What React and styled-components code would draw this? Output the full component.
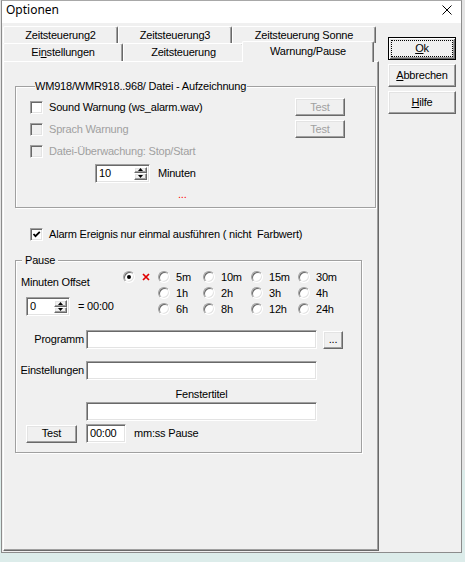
import React from 'react';
import styled, { createGlobalStyle, css } from 'styled-components';

const Global = createGlobalStyle`
  html, body { margin: 0; padding: 0; }
  body {
    width: 465px; height: 562px; overflow: hidden;
    font-family: "Liberation Sans", Arial, sans-serif;
    font-size: 11px; color: #000;
    letter-spacing: -0.2px;
  }
  * { box-sizing: border-box; }
`;

const sunken = css`
  border: 1px solid;
  border-color: #a0a0a0 #ffffff #ffffff #a0a0a0;
  box-shadow: inset 1px 1px 0 #696969, inset -1px -1px 0 #e3e3e3;
`;

const raised = css`
  border: 1px solid;
  border-color: #ffffff #696969 #696969 #ffffff;
  box-shadow: inset -1px -1px 0 #a0a0a0, inset 1px 1px 0 #e3e3e3;
`;

const Screen = styled.div`
  width: 465px;
  height: 562px;
  display: flex;
  align-items: flex-start;
  background: linear-gradient(to bottom, #e4e4e4 0, #e4e4e4 470px, #dcecea 470px);
`;

const Dialog = styled.div`
  margin-left: 1px;
  width: 461px;
  height: 553px;
  border: 1px solid #8c8c8c;
  border-top-color: #a8a8a8;
  background: #f0f0f0;
  display: flex;
  flex-direction: column;
`;

const TitleBar = styled.div`
  height: 22px;
  flex: none;
  background: #ffffff;
  display: flex;
  align-items: center;
  justify-content: space-between;
  padding: 0 9px 4px 4px;
`;

const Title = styled.span`
  font-family: "Noto Sans", "Liberation Sans", sans-serif;
  font-size: 12px;
  letter-spacing: 0;
  line-height: 16px;
  color: #000;
`;

const Body = styled.div`
  flex: 1;
  display: flex;
  align-items: flex-start;
  padding: 3px 0 0 1px;
`;

const TabControl = styled.div`
  width: 376px;
  height: 525px;
  display: flex;
  flex-direction: column;
`;

const TabRow = styled.div`
  height: ${p => p.$h}px;
  flex: none;
  display: flex;
  align-items: flex-end;
`;

const Tab = styled.div`
  width: ${p => p.$w}px;
  height: 100%;
  flex: none;
  display: flex;
  align-items: center;
  justify-content: center;
  background: #f0f0f0;
  border-top: 1px solid #ffffff;
  border-left: 1px solid #ffffff;
  border-right: 1px solid #696969;
  box-shadow: inset -1px 0 0 #a0a0a0;
  border-radius: 2px 2px 0 0;
  line-height: 13px;
  white-space: nowrap;
  ${p => p.$active && css`
    height: 21px;
    margin: 0 -2px -1px -2px;
    padding-bottom: 2px;
    position: relative;
    z-index: 1;
  `}
`;

const Panel = styled.div`
  flex: 1;
  border-top: 1px solid #ffffff;
  border-left: 1px solid #ffffff;
  border-right: 1px solid #696969;
  border-bottom: 1px solid #696969;
  box-shadow: inset -1px -1px 0 #a0a0a0;
  padding-left: 11px;
  display: flex;
  flex-direction: column;
  align-items: flex-start;
`;

const GroupBox = styled.div`
  width: ${p => p.$w}px;
  margin-top: ${p => p.$mt}px;
  padding: 0 ${p => p.$pr || 0}px ${p => p.$pb || 0}px ${p => p.$pl || 0}px;
  border: 1px solid #a0a0a0;
  box-shadow: 1px 1px 0 #ffffff, inset 1px 1px 0 #ffffff;
  display: flex;
  flex-direction: column;
  align-items: stretch;
`;

const Caption = styled.span`
  align-self: flex-start;
  margin: -7px 0 ${p => p.$mb || 0}px ${p => p.$ml}px;
  padding: ${p => p.$pad};
  background: #f0f0f0;
  line-height: 13px;
  white-space: nowrap;
`;

const Row = styled.div`
  height: ${p => p.$h}px;
  margin-top: ${p => p.$mt || 0}px;
  margin-left: ${p => p.$ml || 0}px;
  display: flex;
  align-items: center;
  flex: none;
`;

const Box = styled.span`
  ${sunken};
  width: 13px;
  height: 13px;
  flex: none;
  background: ${p => (p.$disabled ? '#f0f0f0' : '#ffffff')};
  display: flex;
  align-items: center;
  justify-content: center;
`;

const Text = styled.span`
  line-height: 13px;
  white-space: nowrap;
  margin-left: ${p => p.$ml || 0}px;
  color: ${p => (p.$disabled ? '#a0a0a0' : '#000000')};
  ${p => p.$grow && 'flex: 1;'}
`;

const PushButton = styled.button`
  ${raised};
  width: ${p => p.$w}px;
  height: ${p => p.$h}px;
  margin-left: ${p => p.$ml || 0}px;
  flex: none;
  padding: 0;
  background: #f0f0f0;
  font-family: "Liberation Sans", Arial, sans-serif;
  font-size: 11px;
  letter-spacing: -0.2px;
  line-height: 13px;
  color: ${p => (p.$disabled ? '#a0a0a0' : '#000000')};
  display: flex;
  align-items: center;
  justify-content: center;
`;

const ButtonColumn = styled.div`
  margin: 11px 0 0 9px;
  display: flex;
  flex-direction: column;
  gap: 4px;
`;

const DialogButton = styled(PushButton)`
  ${p => p.$default && css`
    border: 1px solid #000000;
    box-shadow: inset 1px 1px 0 #ffffff, inset -1px -1px 0 #696969,
      inset 2px 2px 0 #e3e3e3, inset -2px -2px 0 #a0a0a0;
    padding: 2px;
    align-items: stretch;
  `}
`;

const FocusRing = styled.span`
  flex: 1;
  border: 1px dotted #000000;
  display: flex;
  align-items: center;
  justify-content: center;
`;

const SpinBox = styled.div`
  ${sunken};
  width: ${p => p.$w}px;
  height: 19px;
  margin-left: ${p => p.$ml || 0}px;
  flex: none;
  background: #ffffff;
  display: flex;
  align-items: stretch;
  padding: 2px;
`;

const SpinValue = styled.span`
  flex: 1;
  line-height: 13px;
  padding-left: 1px;
  display: flex;
  align-items: center;
`;

const SpinButtons = styled.div`
  width: 13px;
  display: flex;
  flex-direction: column;
`;

const SpinHalf = styled.span`
  ${raised};
  flex: 1;
  background: #f0f0f0;
  display: flex;
  align-items: center;
  justify-content: center;
`;

const TextInput = styled.div`
  ${sunken};
  width: ${p => p.$w}px;
  height: 19px;
  margin-left: ${p => p.$ml || 0}px;
  flex: none;
  background: #ffffff;
  padding: 2px 3px;
  line-height: 13px;
`;

const FieldLabel = styled.span`
  width: 70px;
  flex: none;
  text-align: right;
  padding-right: 2px;
  line-height: 13px;
  white-space: nowrap;
`;

const CenterLabel = styled.span`
  width: 231px;
  margin-left: 70px;
  text-align: center;
  line-height: 13px;
`;

const TopSection = styled.div`
  display: flex;
  height: 50px;
`;

const LeftCol = styled.div`
  width: 107px;
  flex: none;
  padding: 9px 0 0 5px;
  display: flex;
  flex-direction: column;
`;

const RadioGrid = styled.div`
  display: grid;
  grid-template-columns: 35px 45px 48px 47px 47px;
  grid-auto-rows: 16px;
  padding-top: 2px;
`;

const RadioCell = styled.div`
  display: flex;
  align-items: center;
`;

const RadioCircle = styled.span`
  width: 12px;
  height: 12px;
  flex: none;
  border-radius: 50%;
  border: 1px solid;
  border-color: #a0a0a0 #ffffff #ffffff #a0a0a0;
  box-shadow: inset 1px 1px 0 #696969, inset -1px -1px 0 #e3e3e3;
  background: #ffffff;
  display: flex;
  align-items: center;
  justify-content: center;
`;

const RadioDot = styled.span`
  width: 4px;
  height: 4px;
  border-radius: 50%;
  background: #000000;
`;

const Dots = styled.span`
  margin-left: ${p => p.$ml}px;
  color: #ff0000;
  line-height: 13px;
`;

const CloseIcon = () => (
  <svg width="10" height="10" viewBox="0 0 10 10">
    <path d="M0.5 0.5 L9.5 9.5 M9.5 0.5 L0.5 9.5" stroke="#000" strokeWidth="1" fill="none" />
  </svg>
);

const CheckMark = () => (
  <svg width="9" height="9" viewBox="0 0 9 9">
    <path d="M1.5 4 L3.5 6.2 L7.8 1.8" stroke="#000" strokeWidth="1.8" fill="none" />
  </svg>
);

const RedX = () => (
  <svg width="8" height="8" viewBox="0 0 8 8" style={{ marginLeft: 7 }}>
    <path d="M1 1 L7 7 M7 1 L1 7" stroke="#e00000" strokeWidth="1.7" fill="none" />
  </svg>
);

const Arrow = ({ up }) => (
  <svg width="5" height="3" viewBox="0 0 5 3">
    <path d={up ? 'M2.5 0 L5 3 L0 3 Z' : 'M0 0 L5 0 L2.5 3 Z'} fill="#000" />
  </svg>
);

const Spin = ({ w, ml, value }) => (
  <SpinBox $w={w} $ml={ml}>
    <SpinValue>{value}</SpinValue>
    <SpinButtons>
      <SpinHalf><Arrow up /></SpinHalf>
      <SpinHalf><Arrow /></SpinHalf>
    </SpinButtons>
  </SpinBox>
);

const CheckBox = ({ checked, disabled }) => (
  <Box $disabled={disabled}>{checked && <CheckMark />}</Box>
);

const Radio = ({ label, checked, x }) => (
  <RadioCell>
    <RadioCircle>{checked && <RadioDot />}</RadioCircle>
    {x && <RedX />}
    {label && <Text $ml={6}>{label}</Text>}
  </RadioCell>
);

const radioRows = [
  ['5m', '10m', '15m', '30m'],
  ['1h', '2h', '3h', '4h'],
  ['6h', '8h', '12h', '24h'],
];

export default function App() {
  return (
    <>
      <Global />
      <Screen>
        <Dialog>
          <TitleBar>
            <Title>Optionen</Title>
            <CloseIcon />
          </TitleBar>
          <Body>
            <TabControl>
              <TabRow $h={17}>
                <Tab $w={115}>Zeitsteuerung2</Tab>
                <Tab $w={114}>Zeitsteuerung3</Tab>
                <Tab $w={144}>Zeitsteuerung Sonne</Tab>
              </TabRow>
              <TabRow $h={18}>
                <Tab $w={120}>Ei<u>n</u>stellungen</Tab>
                <Tab $w={121}>Zeitsteuerung</Tab>
                <Tab $w={132} $active>Warnung/Pause</Tab>
              </TabRow>
              <Panel>
                <GroupBox $w={361} $mt={24} $pl={14} $pr={30} $pb={3}>
                  <Caption $ml={5} $pad="0 1px 0 0" $mb={3}>
                    WM918/WMR918..968/ Datei - Aufzeichnung
                  </Caption>
                  <Row $h={22}>
                    <CheckBox />
                    <Text $ml={6} $grow>Sound Warnung (ws_alarm.wav)</Text>
                    <PushButton $w={50} $h={18} $disabled>Test</PushButton>
                  </Row>
                  <Row $h={22}>
                    <CheckBox disabled />
                    <Text $ml={6} $grow $disabled>Sprach Warnung</Text>
                    <PushButton $w={50} $h={18} $disabled>Test</PushButton>
                  </Row>
                  <Row $h={22}>
                    <CheckBox disabled />
                    <Text $ml={6} $grow $disabled>Datei-Überwachung: Stop/Start</Text>
                  </Row>
                  <Row $h={22}>
                    <Spin w={55} ml={65} value="10" />
                    <Text $ml={8}>Minuten</Text>
                  </Row>
                  <Row $h={20}>
                    <Dots $ml={148}>...</Dots>
                  </Row>
                </GroupBox>

                <Row $h={14} $mt={19} $ml={15}>
                  <CheckBox checked />
                  <Text $ml={6}>Alarm Ereignis nur einmal ausführen ( nicht&nbsp; Farbwert)</Text>
                </Row>

                <GroupBox $w={347} $mt={19} $pb={9}>
                  <Caption $ml={6} $pad="0 3px">Pause</Caption>
                  <TopSection>
                    <LeftCol>
                      <Text>Minuten Offset</Text>
                      <Row $h={19} $mt={8} $ml={5}>
                        <Spin w={44} value="0" />
                        <Text $ml={8}>= 00:00</Text>
                      </Row>
                    </LeftCol>
                    <RadioGrid>
                      <Radio checked x />
                      {radioRows[0].map(l => <Radio key={l} label={l} />)}
                      <span />
                      {radioRows[1].map(l => <Radio key={l} label={l} />)}
                      <span />
                      {radioRows[2].map(l => <Radio key={l} label={l} />)}
                    </RadioGrid>
                  </TopSection>

                  <Row $h={19} $mt={13}>
                    <FieldLabel>Programm</FieldLabel>
                    <TextInput $w={231} />
                    <PushButton $w={20} $h={18} $ml={6}>...</PushButton>
                  </Row>
                  <Row $h={19} $mt={12}>
                    <FieldLabel>Einstellungen</FieldLabel>
                    <TextInput $w={231} />
                  </Row>
                  <Row $h={13} $mt={8}>
                    <CenterLabel>Fenstertitel</CenterLabel>
                  </Row>
                  <Row $h={19} $mt={1}>
                    <TextInput $w={231} $ml={70} />
                  </Row>
                  <Row $h={19} $mt={3}>
                    <PushButton $w={51} $h={18} $ml={10}>Test</PushButton>
                    <TextInput $w={40} $ml={9}>00:00</TextInput>
                    <Text $ml={8}>mm:ss Pause</Text>
                  </Row>
                </GroupBox>
              </Panel>
            </TabControl>
            <ButtonColumn>
              <DialogButton $default $w={68} $h={23}>
                <FocusRing><u>O</u>k</FocusRing>
              </DialogButton>
              <DialogButton $w={68} $h={23}><u>A</u>bbrechen</DialogButton>
              <DialogButton $w={68} $h={23}><u>H</u>ilfe</DialogButton>
            </ButtonColumn>
          </Body>
        </Dialog>
      </Screen>
    </>
  );
}
